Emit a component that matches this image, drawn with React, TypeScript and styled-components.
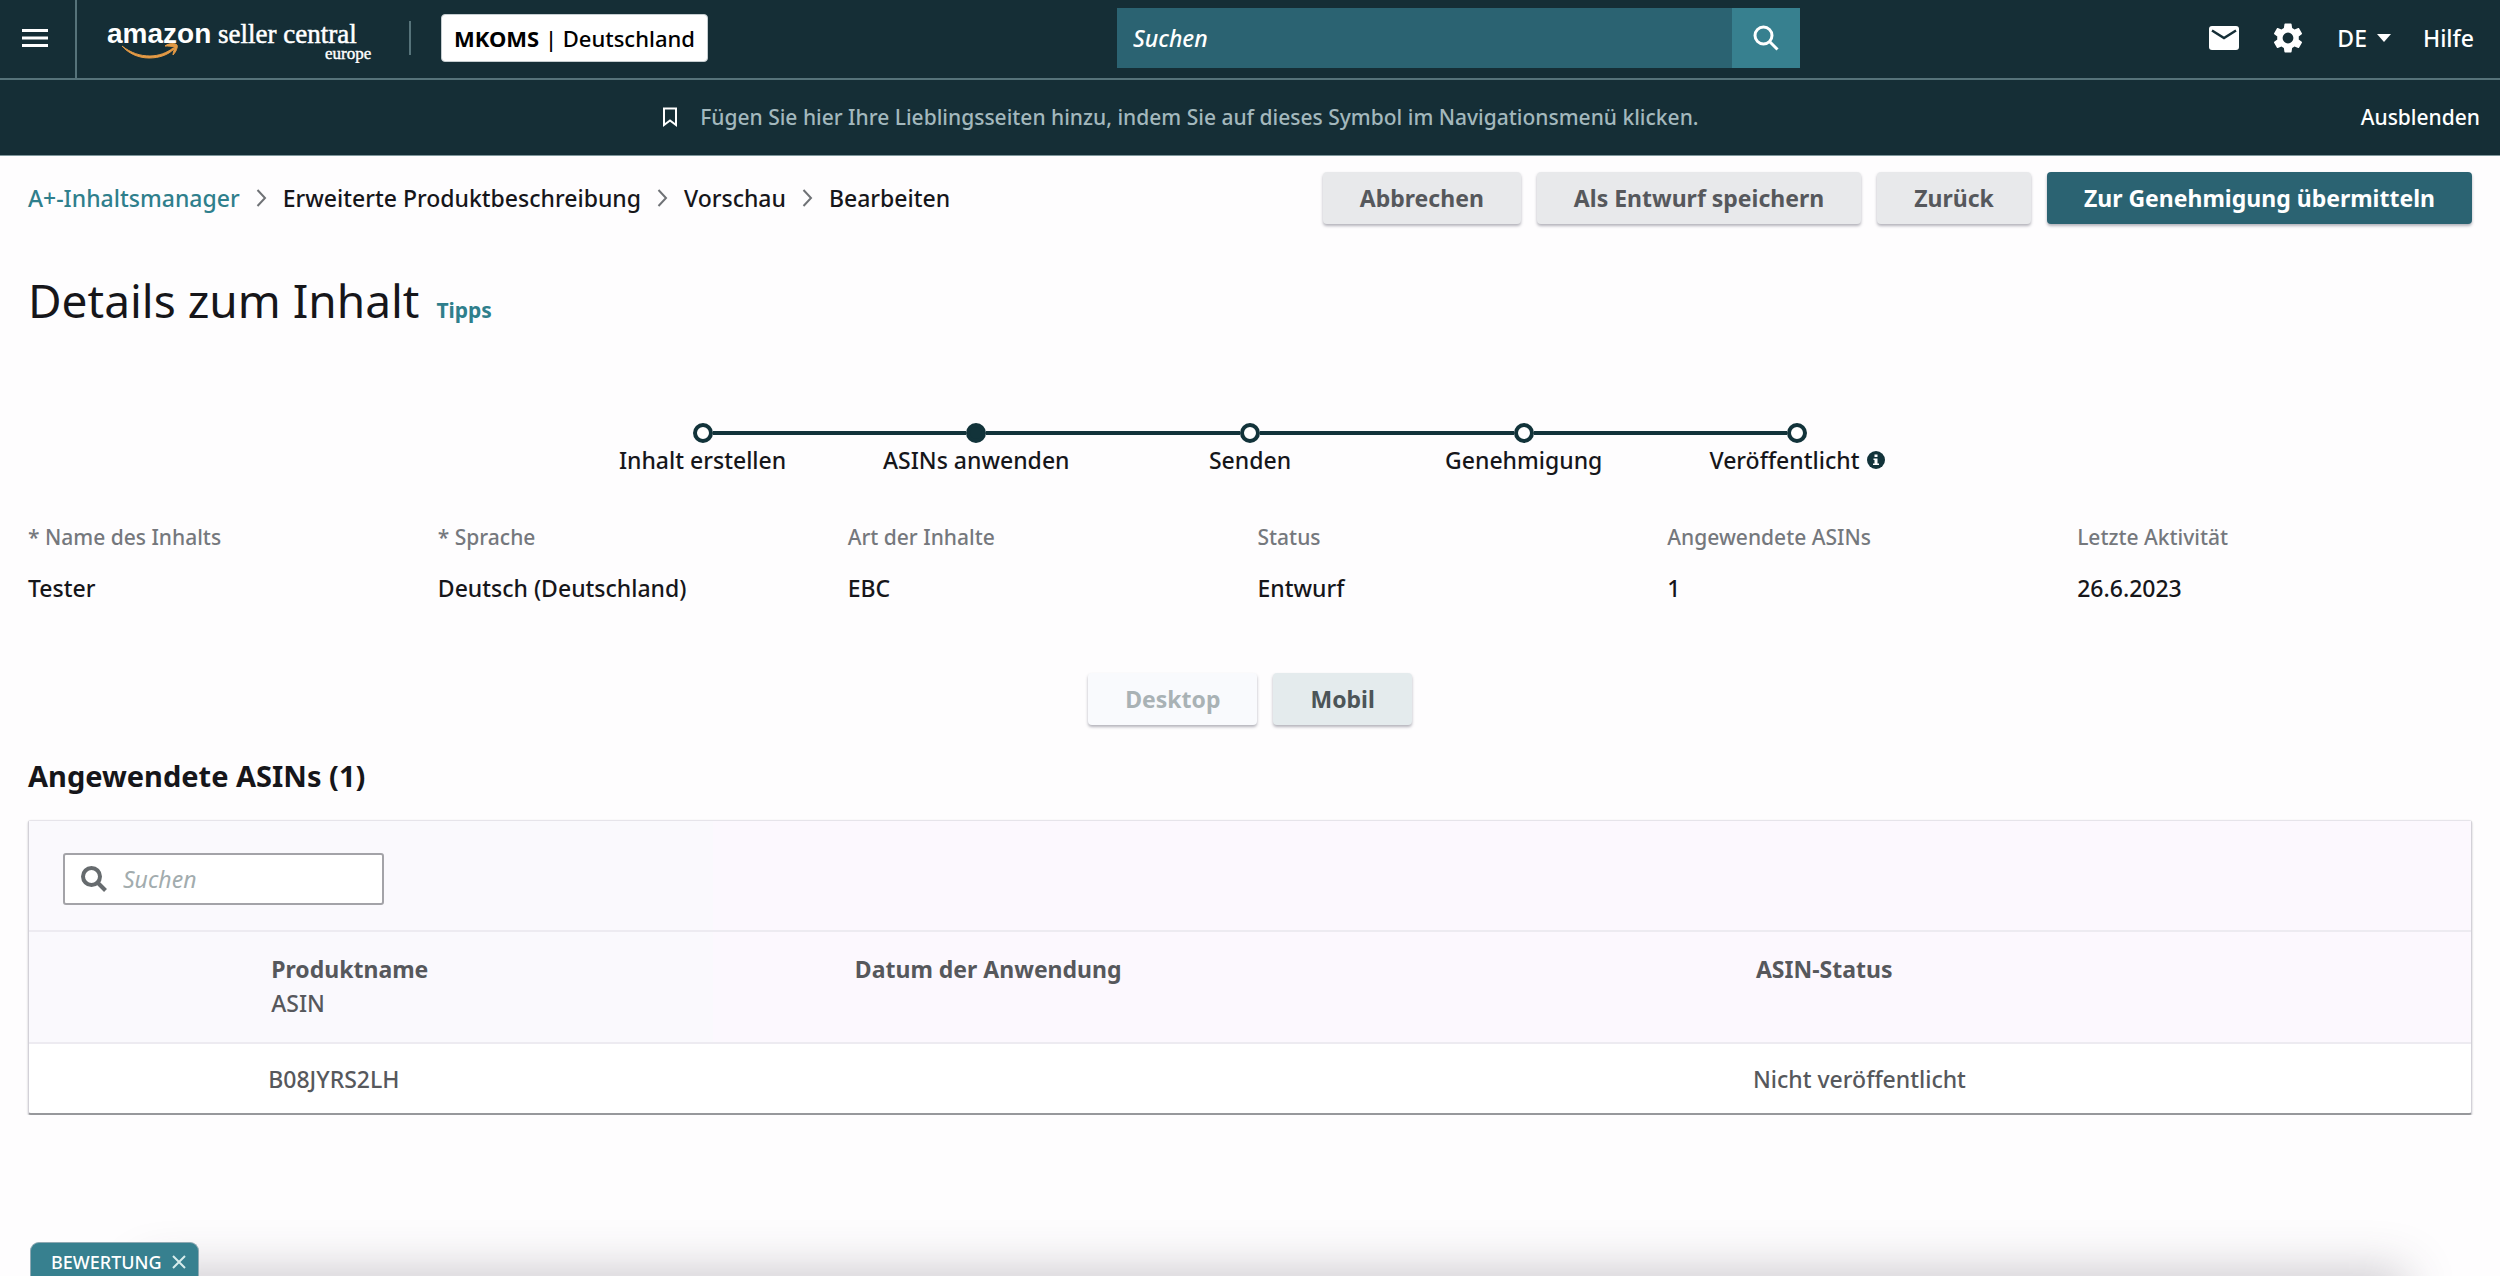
import React from "react";
import styled, { createGlobalStyle } from "styled-components";

const c = {
  ink: "#16161a",
  grey: "#56585c",
  muted: "#75787d",
  navy: "#152e36",
  navyLine: "#56737a",
  teal: "#2b6372",
  tealLight: "#37808f",
  link: "#2f7f8c",
};

const GlobalStyle = createGlobalStyle`
  *, *::before, *::after { box-sizing: border-box; }
  body {
    margin: 0;
    background: #fefdfe;
    color: ${c.ink};
    font: 500 23px/32px "Noto Sans", "Open Sans", sans-serif;
  }
  button, input, select { font: inherit; color: inherit; margin: 0; }
  button { cursor: pointer; }
  a { color: inherit; text-decoration: none; }
  svg { display: block; flex: none; }
`;

const TopBar = styled.header`
  display: grid;
  grid-template-columns: 1117fr 683fr 700fr;
  align-items: center;
  height: 80px;
  background: ${c.navy};
  border-bottom: 2px solid ${c.navyLine};
  color: #fff;
`;

const BarStart = styled.div`
  display: flex;
  align-items: center;
  align-self: stretch;
`;

const MenuButton = styled.button`
  display: flex;
  align-items: center;
  align-self: stretch;
  width: 77px;
  padding: 0 0 2px 22px;
  border: 0;
  border-right: 2px solid ${c.navyLine};
  background: none;
`;

const LogoLink = styled.a`
  margin-left: 30px;
`;

const Divider = styled.span`
  width: 2px;
  height: 34px;
  margin: 0 30px 2px 34px;
  background: ${c.navyLine};
`;

const AccountButton = styled.button`
  height: 48px;
  margin-bottom: 2px;
  padding: 0 12px;
  border: 1px solid #c5cdd0;
  border-radius: 4px;
  background: #fff;
  color: #000;
  font-size: 22px;
  white-space: nowrap;
`;

const GlobalSearch = styled.form`
  display: flex;
  height: 60px;
  margin-bottom: 2px;
`;

const GlobalSearchInput = styled.input`
  flex: 1;
  min-width: 0;
  padding: 0 16px;
  border: 0;
  border-radius: 0;
  background: ${c.teal};
  font-style: italic;
  &::placeholder { color: #fff; opacity: 1; }
`;

const GlobalSearchButton = styled.button`
  display: grid;
  place-items: center;
  width: 68px;
  border: 0;
  background: ${c.tealLight};
`;

const BarEnd = styled.div`
  display: flex;
  align-items: center;
  justify-content: flex-end;
  padding: 0 26px 2px 0;
`;

const IconButton = styled.button`
  display: flex;
  margin-right: 34px;
  padding: 0;
  border: 0;
  background: none;
`;

const LanguageField = styled.label`
  display: flex;
  align-items: center;
  gap: 10px;
  margin-right: 32px;
`;

const LanguageSelect = styled.select`
  appearance: none;
  field-sizing: content;
  padding: 0;
  border: 0;
  background: none;
`;

const FavouritesBar = styled.div`
  display: flex;
  align-items: center;
  height: 76px;
  padding: 0 20px 2px 0;
  background: ${c.navy};
  border-bottom: 1px solid #7f979c;
  color: #fff;
  font-size: 21px;
`;

const FavouritesHint = styled.p`
  flex: 1;
  display: flex;
  align-items: center;
  justify-content: center;
  gap: 22px;
  margin: 0;
  color: #a3b8bd;
`;

const HideButton = styled.button`
  padding: 0;
  border: 0;
  background: none;
`;

const Main = styled.main`
  padding: 16px 28px 0;
`;

const ActionRow = styled.div`
  display: flex;
  align-items: center;
  justify-content: space-between;
`;

const Crumbs = styled.ol`
  display: flex;
  align-items: center;
  gap: 16px;
  margin: 0;
  padding: 0;
  list-style: none;
`;

const Crumb = styled.li<{ $link?: boolean }>`
  display: flex;
  align-items: center;
  gap: 16px;
  color: ${(p) => (p.$link ? c.link : c.ink)};
`;

const ButtonRow = styled.div<{ $centered?: boolean }>`
  display: flex;
  gap: 16px;
  justify-content: ${(p) => (p.$centered ? "center" : "flex-end")};
`;

const tones = {
  neutral: { bg: "#e8e9eb", fg: c.grey },
  primary: { bg: c.teal, fg: "#fff" },
  ghost: { bg: "#f9fafd", fg: "#a9b2b5" },
  tinted: { bg: "#e4ebed", fg: "#4c5558" },
};

const Button = styled.button<{ $tone: keyof typeof tones }>`
  height: 52px;
  padding: 0 37px;
  border: 0;
  border-radius: 4px;
  background: ${(p) => tones[p.$tone].bg};
  color: ${(p) => tones[p.$tone].fg};
  box-shadow: 0 2px 3px rgba(40, 40, 60, 0.35);
  font-weight: 700;
  white-space: nowrap;
`;

const TitleRow = styled.div`
  display: flex;
  align-items: baseline;
  gap: 17px;
  margin-top: 44px;
`;

const Title = styled.h1`
  margin: 0;
  font-size: 46px;
  font-weight: 400;
  line-height: 64px;
`;

const TipsLink = styled.a`
  color: ${c.link};
  font-size: 21px;
  font-weight: 700;
`;

const Steps = styled.ol`
  display: grid;
  grid-template-columns: repeat(5, 1fr);
  width: 56%;
  margin: 91px auto 0;
  padding: 0;
  list-style: none;
`;

const Step = styled.li`
  display: flex;
  flex-direction: column;
  align-items: center;
`;

const StepTrack = styled.span`
  display: flex;
  align-items: center;
  width: 100%;
`;

const StepLine = styled.span<{ $hidden?: boolean }>`
  flex: 1;
  height: 4px;
  background: ${(p) => (p.$hidden ? "transparent" : "#12333a")};
`;

const StepDot = styled.span<{ $active?: boolean }>`
  width: 20px;
  height: 20px;
  border: 4px solid #12333a;
  border-radius: 50%;
  background: ${(p) => (p.$active ? "#12333a" : "#fff")};
`;

const StepLabel = styled.span`
  display: flex;
  align-items: center;
  gap: 8px;
  margin-top: 1px;
`;

const Facts = styled.dl`
  display: grid;
  grid-template-columns: repeat(6, 1fr);
  margin: 45px -15px 0 0;
`;

const FactLabel = styled.dt`
  color: ${c.muted};
  font-size: 21px;
`;

const FactValue = styled.dd`
  margin: 19px 0 0;
`;

const ViewSwitch = styled(ButtonRow)`
  margin-top: 69px;
`;

const SectionTitle = styled.h2`
  margin: 31px 0 24px;
  font-size: 29px;
  font-weight: 700;
  line-height: 40px;
`;

const Panel = styled.section`
  border: 1px solid #d3d1d8;
  border-top-color: #e6e4ea;
  border-bottom: 2px solid #97989c;
  border-radius: 3px;
  background: #fff;
  box-shadow: 0 1px 2px rgba(30, 30, 40, 0.3);
`;

const PanelTools = styled.div`
  padding: 32px 34px 25px;
  background: linear-gradient(90deg, #faf9fd 0 28%, #fcf8fe 28%);
`;

const TableSearch = styled.label`
  display: flex;
  align-items: center;
  gap: 16px;
  width: 321px;
  height: 52px;
  padding: 0 16px;
  border: 2px solid #a3a3a8;
  border-radius: 3px;
  background: #fff;
`;

const TableSearchInput = styled.input`
  flex: 1;
  min-width: 0;
  padding: 0;
  border: 0;
  background: none;
  font-style: italic;
  font-weight: 400;
  &::placeholder { color: #a2acae; opacity: 1; }
`;

const Table = styled.table`
  width: 100%;
  table-layout: fixed;
  border-collapse: collapse;
  color: ${c.grey};
  text-align: left;
`;

const ColumnHead = styled.th<{ $width?: string }>`
  width: ${(p) => p.$width ?? "auto"};
  height: 112px;
  padding: 20px 20px 18px;
  border-top: 2px solid #edebf1;
  border-bottom: 2px solid #edebf1;
  font-weight: 700;
  line-height: 34px;
  vertical-align: top;
`;

const HeadRow = styled.tr`
  background: linear-gradient(90deg, #faf9fd 0 28%, #fcf8fe 28%);
`;

const HeadSub = styled.span`
  display: block;
  font-weight: 500;
`;

const Cell = styled.td`
  height: 70px;
  padding: 0 17px;
`;

const BottomShade = styled.div`
  position: fixed;
  right: 100px;
  bottom: -40px;
  left: 150px;
  height: 40px;
  box-shadow: 0 0 48px 6px rgba(60, 55, 70, 0.26);
`;

const FeedbackTab = styled.div`
  position: fixed;
  bottom: 0;
  left: 30px;
  display: flex;
  align-items: center;
  gap: 10px;
  height: 34px;
  padding: 4px 12px 0 20px;
  border: 1px solid #8fa9b3;
  border-bottom: 0;
  border-radius: 9px 9px 0 0;
  background: ${c.tealLight};
  color: #fff;
  font-size: 18px;
  line-height: 26px;
`;

const TabButton = styled.button`
  display: flex;
  padding: 0;
  border: 0;
  background: none;
`;

const Logo = () => (
  <svg width="268" height="48" viewBox="0 0 268 48" role="img" aria-label="amazon seller central europe">
    <g fill="#fff">
      <text x="0" y="28" fontFamily="Liberation Sans, Arial, sans-serif" fontWeight="700" fontSize="28">amazon</text>
      <text x="111" y="28" fontFamily="Liberation Serif, serif" fontSize="27" fontWeight="400" stroke="#fff" strokeWidth="0.5">seller central</text>
      <text x="218" y="44" fontFamily="Liberation Serif, serif" fontSize="17" fontWeight="400" stroke="#fff" strokeWidth="0.4">europe</text>
    </g>
    <path d="M15 31c9 7 18 10 28 10 8 0 17-3 23-8l1 1c-6 6-15 9-25 9-11 0-21-5-27-12z" fill="#e49a45" stroke="#e49a45" strokeWidth="1" />
    <path d="M58 31c4-3 10-3 12-1 1 2-1 7-4 10 0-3 2-6 1-8-2-1-6-1-9-1z" fill="#e49a45" stroke="#e49a45" strokeWidth="1" />
  </svg>
);

const SearchIcon = ({ color, stroke }: { color: string; stroke: number }) => (
  <svg width="26" height="26" viewBox="0 0 26 26" fill="none" stroke={color} strokeWidth={stroke}>
    <circle cx="10.5" cy="10.5" r="8.5" />
    <path d="M16.500 16.500 24.500 24.500" />
  </svg>
);

const ChevronIcon = () => (
  <svg width="11" height="18" viewBox="0 0 11 18" fill="none" stroke="#6f7276" strokeWidth="2">
    <path d="M1.500 1 9 9l-7.500 8" />
  </svg>
);

const crumbs = ["A+-Inhaltsmanager", "Erweiterte Produktbeschreibung", "Vorschau", "Bearbeiten"];
const steps = ["Inhalt erstellen", "ASINs anwenden", "Senden", "Genehmigung", "Veröffentlicht"];
const activeStep = 1;
const facts = [
  ["* Name des Inhalts", "Tester"],
  ["* Sprache", "Deutsch (Deutschland)"],
  ["Art der Inhalte", "EBC"],
  ["Status", "Entwurf"],
  ["Angewendete ASINs", "1"],
  ["Letzte Aktivität", "26.6.2023"],
];

export default function App() {
  return (
    <>
      <GlobalStyle />
      <TopBar>
        <BarStart>
          <MenuButton type="button" aria-label="Menü">
            <svg width="26" height="18" viewBox="0 0 26 18" fill="#fff">
              <path d="M0 0h26v3H0zM0 7.500h26v3H0zM0 15h26v3H0z" />
            </svg>
          </MenuButton>
          <LogoLink href="#">
            <Logo />
          </LogoLink>
          <Divider />
          <AccountButton type="button">
            <b>MKOMS</b> | Deutschland
          </AccountButton>
        </BarStart>
        <GlobalSearch role="search">
          <GlobalSearchInput type="text" aria-label="Suchen" placeholder="Suchen" />
          <GlobalSearchButton type="button" aria-label="Suche starten">
            <SearchIcon color="#fff" stroke={3} />
          </GlobalSearchButton>
        </GlobalSearch>
        <BarEnd>
          <IconButton type="button" aria-label="Nachrichten">
            <svg width="30" height="24" viewBox="0 0 30 24">
              <rect width="30" height="24" rx="3" fill="#fff" />
              <path d="M3 4.500 15 12 27 4.500" fill="none" stroke={c.navy} strokeWidth="2.500" />
            </svg>
          </IconButton>
          <IconButton type="button" aria-label="Einstellungen">
            <svg width="30" height="30" viewBox="2 2 20 20" fill="#fff">
              <path d="M19.140 12.940c.04-.3.060-.61.060-.94 0-.32-.02-.64-.07-.94l2.030-1.580c.18-.14.230-.41.120-.61l-1.920-3.320c-.12-.22-.37-.29-.59-.22l-2.390.96c-.5-.38-1.030-.7-1.620-.94l-.36-2.540c-.04-.24-.24-.41-.48-.41h-3.840c-.24 0-.43.170-.47.410l-.36 2.540c-.59.240-1.130.570-1.620.940l-2.390-.96c-.22-.08-.47 0-.59.220L2.740 8.870c-.12.210-.08.470.120.610l2.030 1.580c-.05.300-.09.630-.09.940s.020.640.070.940l-2.030 1.580c-.18.140-.23.410-.12.610l1.920 3.320c.12.220.37.290.59.220l2.390-.96c.5.380 1.030.7 1.620.940l.36 2.540c.05.240.24.410.48.410h3.840c.24 0 .44-.17.470-.41l.36-2.540c.59-.24 1.130-.56 1.620-.94l2.390.960c.22.080.47 0 .59-.22l1.920-3.320c.12-.22.070-.47-.12-.61l-2.010-1.580zM12 15.600A3.600 3.600 0 1 1 12 8.400a3.600 3.600 0 0 1 0 7.200z" />
            </svg>
          </IconButton>
          <LanguageField>
            <LanguageSelect aria-label="Sprache" defaultValue="DE">
              <option>DE</option>
            </LanguageSelect>
            <svg width="14" height="8" viewBox="0 0 14 8" fill="#fff">
              <path d="M0 0h14L7 8z" />
            </svg>
          </LanguageField>
          <a href="#">Hilfe</a>
        </BarEnd>
      </TopBar>
      <FavouritesBar>
        <FavouritesHint>
          <svg width="16" height="20" viewBox="0 0 16 20" fill="none" stroke="#fff" strokeWidth="2">
            <path d="M2 1.500h12v16.500l-6-4.500-6 4.500z" />
          </svg>
          Fügen Sie hier Ihre Lieblingsseiten hinzu, indem Sie auf dieses Symbol im Navigationsmenü klicken.
        </FavouritesHint>
        <HideButton type="button">Ausblenden</HideButton>
      </FavouritesBar>
      <Main>
        <ActionRow>
          <nav aria-label="Brotkrumen">
            <Crumbs>
              {crumbs.map((name, i) => (
                <Crumb key={name} $link={i === 0}>
                  {i > 0 && <ChevronIcon />}
                  {i === 0 ? <a href="#">{name}</a> : name}
                </Crumb>
              ))}
            </Crumbs>
          </nav>
          <ButtonRow>
            <Button type="button" $tone="neutral">Abbrechen</Button>
            <Button type="button" $tone="neutral">Als Entwurf speichern</Button>
            <Button type="button" $tone="neutral">Zurück</Button>
            <Button type="button" $tone="primary">Zur Genehmigung übermitteln</Button>
          </ButtonRow>
        </ActionRow>
        <TitleRow>
          <Title>Details zum Inhalt</Title>
          <TipsLink href="#">Tipps</TipsLink>
        </TitleRow>
        <Steps>
          {steps.map((name, i) => (
            <Step key={name} aria-current={i === activeStep ? "step" : undefined}>
              <StepTrack>
                <StepLine $hidden={i === 0} />
                <StepDot $active={i === activeStep} />
                <StepLine $hidden={i === steps.length - 1} />
              </StepTrack>
              <StepLabel>
                {name}
                {i === steps.length - 1 && (
                  <svg width="18" height="18" viewBox="0 0 18 18">
                    <circle cx="9" cy="9" r="9" fill="#12333a" />
                    <path d="M7.500 3.500h3v2.500h-3zM6.500 7.500h4v5h1.500v1.500H6v-1.500h1.500V9h-1z" fill="#fff" />
                  </svg>
                )}
              </StepLabel>
            </Step>
          ))}
        </Steps>
        <Facts>
          {facts.map(([label, value]) => (
            <div key={label}>
              <FactLabel>{label}</FactLabel>
              <FactValue>{value}</FactValue>
            </div>
          ))}
        </Facts>
        <ViewSwitch $centered>
          <Button type="button" $tone="ghost">Desktop</Button>
          <Button type="button" $tone="tinted">Mobil</Button>
        </ViewSwitch>
        <SectionTitle>Angewendete ASINs (1)</SectionTitle>
        <Panel>
          <PanelTools>
            <TableSearch>
              <SearchIcon color="#666b6e" stroke={4} />
              <TableSearchInput type="text" aria-label="ASINs suchen" placeholder="Suchen" />
            </TableSearch>
          </PanelTools>
          <Table>
            <thead>
              <HeadRow>
                <ColumnHead $width="9.1%" />
                <ColumnHead $width="23.9%">
                  Produktname
                  <HeadSub>ASIN</HeadSub>
                </ColumnHead>
                <ColumnHead $width="36.9%">Datum der Anwendung</ColumnHead>
                <ColumnHead>ASIN-Status</ColumnHead>
              </HeadRow>
            </thead>
            <tbody>
              <tr>
                <Cell />
                <Cell>B08JYRS2LH</Cell>
                <Cell />
                <Cell>Nicht veröffentlicht</Cell>
              </tr>
            </tbody>
          </Table>
        </Panel>
      </Main>
      <BottomShade />
      <FeedbackTab>
        <TabButton type="button">BEWERTUNG</TabButton>
        <TabButton type="button" aria-label="Schließen">
          <svg width="14" height="14" viewBox="0 0 14 14" stroke="#d7ecec" strokeWidth="2">
            <path d="M1 1 13 13M13 1 1 13" />
          </svg>
        </TabButton>
      </FeedbackTab>
    </>
  );
}
